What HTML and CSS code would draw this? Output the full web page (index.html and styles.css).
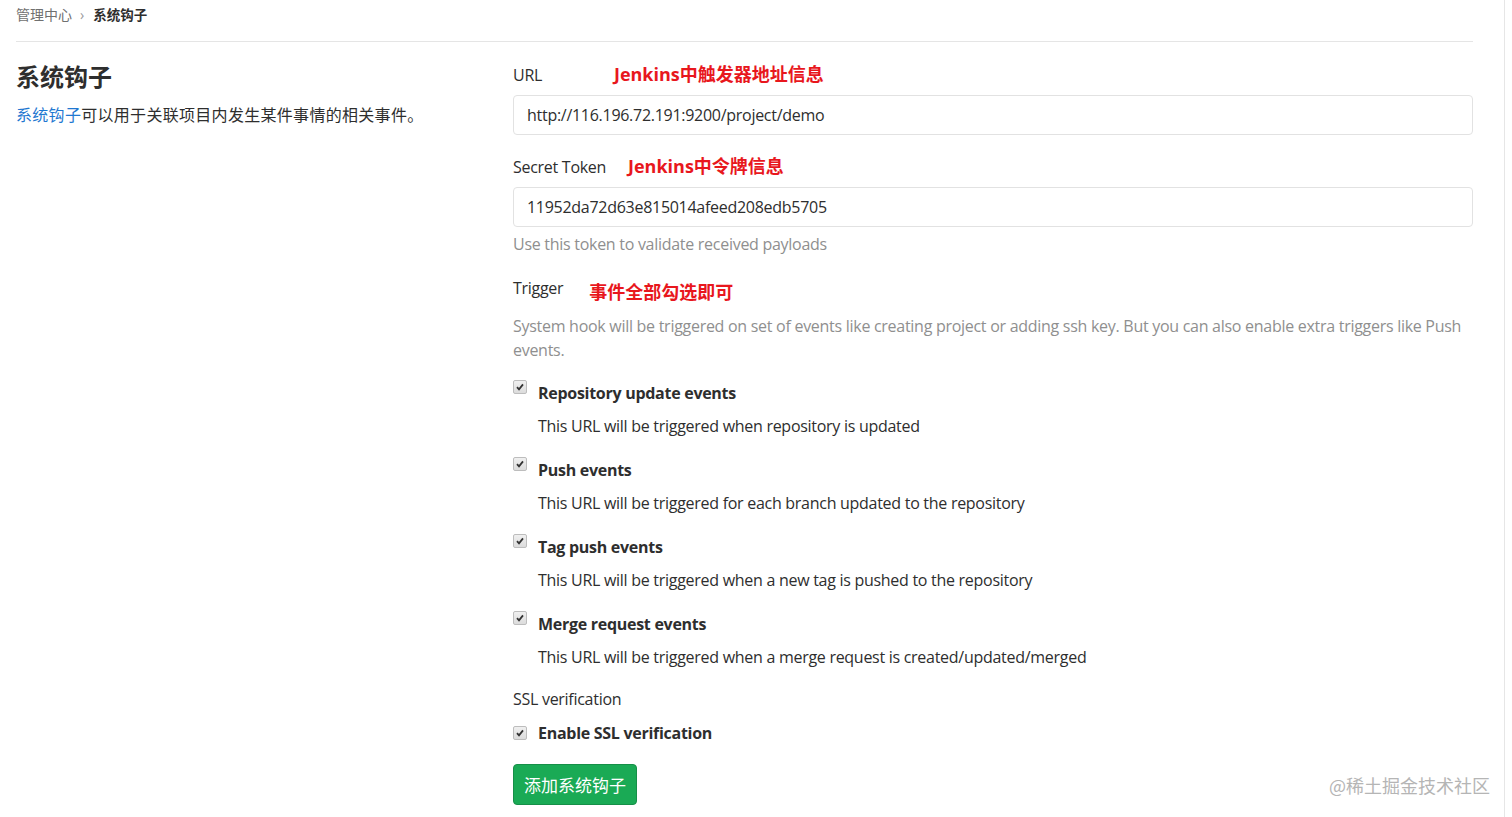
FILE: index.html
```html
<!DOCTYPE html>
<html lang="zh-CN">
  <head>
    <meta charset="UTF-8" />
    <meta name="viewport" content="width=device-width, initial-scale=1.0" />
    <title>系统钩子</title>
    <link rel="stylesheet" href="styles.css">
  </head>
  <body>
    <div class="page">
      <div class="breadcrumb">
        <a href="#">管理中心</a>
        <span class="sep">&rsaquo;</span>
        <strong>系统钩子</strong>
      </div>

      <div class="content">
        <div class="intro">
          <h3>系统钩子</h3>
          <p><a href="#">系统钩子</a>可以用于关联项目内发生某件事情的相关事件。</p>
        </div>

        <form class="hook-form">
          <div class="field">
            <label class="label">URL <span class="note note-url">Jenkins中触发器地址信息</span></label>
            <input class="input" type="text" value="http://116.196.72.191:9200/project/demo">
          </div>

          <div class="field">
            <label class="label">Secret Token <span class="note note-token">Jenkins中令牌信息</span></label>
            <input class="input" type="text" value="11952da72d63e815014afeed208edb5705">
            <p class="help">Use this token to validate received payloads</p>
          </div>

          <div class="field">
            <label class="label label-trigger">Trigger <span class="note note-trigger">事件全部勾选即可</span></label>
            <p class="help help-trigger">System hook will be triggered on set of events like creating project or adding ssh key. But you can also enable extra triggers like Push events.</p>
          </div>

          <div class="check">
            <span class="box"><svg viewBox="0 0 12 12"><path d="M3 6.2l2 2.2 4-5" /></svg></span>
            <div>
              <strong>Repository update events</strong>
              <p>This URL will be triggered when repository is updated</p>
            </div>
          </div>
          <div class="check">
            <span class="box"><svg viewBox="0 0 12 12"><path d="M3 6.2l2 2.2 4-5" /></svg></span>
            <div>
              <strong>Push events</strong>
              <p>This URL will be triggered for each branch updated to the repository</p>
            </div>
          </div>
          <div class="check">
            <span class="box"><svg viewBox="0 0 12 12"><path d="M3 6.2l2 2.2 4-5" /></svg></span>
            <div>
              <strong>Tag push events</strong>
              <p>This URL will be triggered when a new tag is pushed to the repository</p>
            </div>
          </div>
          <div class="check">
            <span class="box"><svg viewBox="0 0 12 12"><path d="M3 6.2l2 2.2 4-5" /></svg></span>
            <div>
              <strong>Merge request events</strong>
              <p>This URL will be triggered when a merge request is created/updated/merged</p>
            </div>
          </div>

          <div class="field field-ssl">
            <label class="label">SSL verification</label>
            <div class="check check-ssl">
              <span class="box"><svg viewBox="0 0 12 12"><path d="M3 6.2l2 2.2 4-5" /></svg></span>
              <strong>Enable SSL verification</strong>
            </div>
          </div>

          <button type="button" class="btn">添加系统钩子</button>
        </form>
      </div>
    </div>
    <div class="watermark">@稀土掘金技术社区</div>
  </body>
</html>
```

FILE: styles.css
```css
body {
  font-family: "Open Sans", "Noto Sans CJK SC", sans-serif;
  background-color: #fff;
  color: #2e2e2e;
  margin: 0;
  padding: 0;
  height: 817px;
  overflow: hidden;
  border-right: 1px solid #e6e6e6;
  width: 1505px;
  box-sizing: border-box;
}

.page {
  width: 1457px;
  padding-left: 16px;
}

.breadcrumb {
  display: flex;
  align-items: center;
  height: 27px;
  padding-top: 1px;
  padding-bottom: 13px;
  font-size: 14px;
  line-height: 26px;
  border-bottom: 1px solid #e5e5e5;
}

.breadcrumb a {
  color: #707070;
  text-decoration: none;
}

.breadcrumb .sep {
  color: #999;
  margin: 0 9px 0 8px;
  font-size: 14px;
}

.breadcrumb strong {
  color: #2e2e2e;
  font-weight: bold;
  font-size: 13.5px;
}

.content {
  display: flex;
}

.intro {
  width: 497px;
  flex-shrink: 0;
}

.intro h3 {
  font-size: 24px;
  font-weight: bold;
  margin: 18px 0 9px;
  line-height: 34px;
  color: #2e2e2e;
}

.intro p {
  font-size: 16px;
  margin: 0;
  color: #2e2e2e;
  line-height: 24px;
  letter-spacing: 0.3px;
}

.intro a {
  color: #1f78d1;
  text-decoration: none;
}

.hook-form {
  flex: 1;
  padding-top: 19px;
  letter-spacing: -0.28px;
}

.field {
  margin-bottom: 18px;
}

.label {
  display: block;
  font-size: 16px;
  line-height: 26px;
  margin-bottom: 7px;
  color: #2e2e2e;
}

.note {
  color: #e8171d;
  font-weight: bold;
  font-size: 18px;
  letter-spacing: 0;
}

.note-url {
  margin-left: 68px;
}

.note-token {
  margin-left: 18px;
}

.note-trigger {
  margin-left: 22px;
  position: relative;
  top: 5px;
}

.input {
  display: block;
  width: 100%;
  box-sizing: border-box;
  height: 40px;
  padding: 0 13px;
  font-family: inherit;
  font-size: 16px;
  letter-spacing: -0.28px;
  color: #2e2e2e;
  border: 1px solid #e2e2e2;
  border-radius: 4px;
  outline: none;
}

.help {
  margin: 5px 0 0;
  font-size: 16px;
  line-height: 24px;
  color: #8f8f8f;
}

.label-trigger {
  margin-bottom: 13px;
}

.help-trigger {
  margin: 0 0 1px;
}

.check {
  display: flex;
  align-items: flex-start;
  margin-bottom: 19px;
}

.box {
  width: 12px;
  height: 12px;
  border: 1px solid #bdbdbd;
  border-radius: 2px;
  background: linear-gradient(#f0f0f0, #dcdcdc);
  margin-right: 11px;
  margin-top: 0;
  flex-shrink: 0;
}

.box svg {
  display: block;
  width: 12px;
  height: 12px;
  fill: none;
  stroke: #333;
  stroke-width: 1.8;
}

.check strong {
  display: block;
  font-size: 16px;
  line-height: 24px;
  margin-top: 1px;
  color: #2e2e2e;
}

.check p {
  margin: 9px 0 0;
  font-size: 16px;
  line-height: 24px;
  color: #2e2e2e;
}

.field-ssl {
  margin-top: -2px;
  margin-bottom: 19px;
}

.field-ssl .label {
  margin-bottom: 9px;
}

.check-ssl {
  margin-bottom: 0;
  align-items: center;
}

.check-ssl .box {
  margin-top: 0;
}

.check-ssl strong {
  margin-top: 0;
}

.btn {
  display: inline-block;
  background-color: #1aaa55;
  color: white;
  border: 1px solid #168f48;
  border-radius: 4px;
  height: 41px;
  padding: 0 10px;
  font-family: inherit;
  font-size: 17px;
  cursor: pointer;
}

.watermark {
  position: absolute;
  right: 22px;
  top: 772px;
  font-size: 18px;
  color: #b5b5b5;
  font-family: "Noto Sans CJK SC", sans-serif;
}
```
